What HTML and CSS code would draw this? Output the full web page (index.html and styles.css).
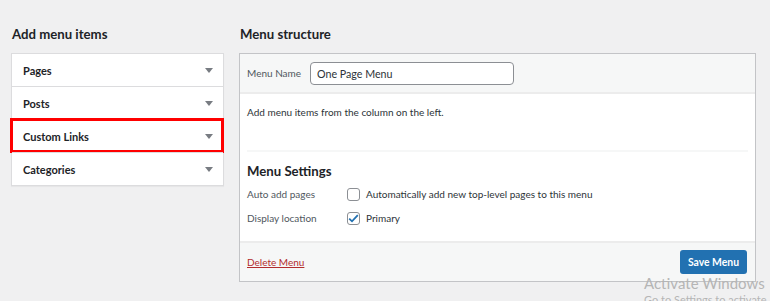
FILE: index.html
```html
<!DOCTYPE html>
<html>
<head>
    <meta charset="UTF-8">
    <title>Menus</title>
    <link rel="stylesheet" href="styles.css">
</head>
<body>
<div class="page">
    <div class="col-left">
        <h2>Add menu items</h2>
        <ul class="accordion">
            <li><span>Pages</span><em></em></li>
            <li><span>Posts</span><em></em></li>
            <li class="mark"><span>Custom Links</span><em></em></li>
            <li><span>Categories</span><em></em></li>
        </ul>
    </div>
    <div class="col-right">
        <h2>Menu structure</h2>
        <div class="menu-box">
            <div class="menu-head">
                <label>Menu Name</label>
                <input type="text" value="One Page Menu">
            </div>
            <div class="menu-body">
                <p class="hint">Add menu items from the column on the left.</p>
                <div class="settings">
                    <h3>Menu Settings</h3>
                    <div class="set-row">
                        <span class="set-name">Auto add pages</span>
                        <span class="box"></span>
                        <span class="set-text">Automatically add new top-level pages to this menu</span>
                    </div>
                    <div class="set-row">
                        <span class="set-name">Display location</span>
                        <span class="box checked">
                            <svg width="11" height="9" viewBox="0 0 11 9"><path d="M1.2 4.6 L4 7.3 L9.8 1.2" fill="none" stroke="#2271b1" stroke-width="1.8"/></svg>
                        </span>
                        <span class="set-text">Primary</span>
                    </div>
                </div>
            </div>
            <div class="menu-foot">
                <a href="#" class="delete">Delete Menu</a>
                <button type="button">Save Menu</button>
            </div>
        </div>
    </div>
</div>
<div class="watermark">
    <div class="wm-big">Activate Windows</div>
    <div class="wm-small">Go to Settings to activate Windows.</div>
</div>
</body>
</html>
```

FILE: styles.css
```css
* {
    margin: 0;
    padding: 0;
    box-sizing: border-box;
    font-family: Lato, "Noto Sans", sans-serif;
    font-size: 10px;
    color: #2c3338;
}

html, body {
    height: 100%;
    overflow: hidden;
}

body {
    background: #f0f0f1;
}

ul, li {
    list-style: none;
}

.page {
    display: flex;
    gap: 15px;
    padding: 24px 0 0 11px;
}

h2 {
    font-size: 13.2px;
    font-weight: 700;
    color: #1d2327;
    height: 29px;
    line-height: 20px;
    padding-left: 1px;
}

.col-left {
    width: 213px;
}

.accordion {
    background: #fff;
    border: 1px solid #dcdcde;
    box-shadow: 0 1px 1px rgba(0, 0, 0, .04);
}

.accordion li {
    position: relative;
    display: flex;
    align-items: center;
    justify-content: space-between;
    height: 33px;
    padding: 0 10px 0 11px;
    border-top: 1px solid #dcdcde;
}

.accordion li:first-child {
    height: 32px;
    border-top: 0;
}

.accordion span {
    font-size: 11px;
    font-weight: 700;
    color: #1d2327;
}

.accordion em {
    width: 0;
    height: 0;
    border-left: 4px solid transparent;
    border-right: 4px solid transparent;
    border-top: 5px solid #787c82;
}

/* red highlight round the third row */
.accordion li.mark:after {
    content: "";
    position: absolute;
    left: -2px;
    right: -1px;
    top: -2px;
    bottom: -1px;
    border: 3px solid #f00;
}

.col-right {
    width: 517px;
}

.menu-box {
    border: 1px solid #c3c4c7;
    background: #fff;
}

.menu-head {
    display: flex;
    align-items: center;
    height: 40px;
    padding: 0 7px;
    background: #f6f7f7;
    border-bottom: 2px solid #ececec;
}

.menu-head label {
    color: #50575e;
    width: 63px;
    white-space: nowrap;
}

.menu-head input {
    width: 204px;
    height: 23px;
    padding: 0 6px;
    border: 1px solid #8c8f94;
    border-radius: 4px;
    font-size: 10.7px;
    color: #2c3338;
    outline: none;
}

.menu-body {
    padding: 0 7px;
}

.hint {
    padding-top: 10px;
    height: 56px;
    line-height: 16px;
}

.settings {
    border-top: 2px solid #f6f7f7;
    padding: 9px 0 11px;
}

.settings h3 {
    font-size: 13.2px;
    font-weight: 700;
    color: #1d2327;
    line-height: 20px;
    margin-bottom: 1px;
}

.set-row {
    display: flex;
    align-items: center;
    height: 24px;
}

.set-name {
    width: 100px;
    color: #50575e;
}

.box {
    display: flex;
    align-items: center;
    justify-content: center;
    width: 13px;
    height: 13px;
    border: 1px solid #8c8f94;
    border-radius: 3px;
    margin-right: 6px;
}

.menu-foot {
    display: flex;
    align-items: center;
    justify-content: space-between;
    height: 40px;
    padding: 0 8px 0 7px;
    background: #f6f7f7;
    border-top: 2px solid #ececec;
}

.delete {
    color: #b32d2e;
}

.menu-foot button {
    width: 67px;
    height: 24px;
    border: 0;
    border-radius: 3px;
    background: #2271b1;
    color: #fff;
    font-size: 10.4px;
    font-weight: 700;
}

.watermark {
    position: absolute;
    left: 644px;
    top: 273px;
}

.wm-big {
    font-size: 15px;
    line-height: 20px;
    color: #b5b5b5;
}

.wm-small {
    font-size: 11px;
    line-height: 14px;
    color: #b5b5b5;
}
```
